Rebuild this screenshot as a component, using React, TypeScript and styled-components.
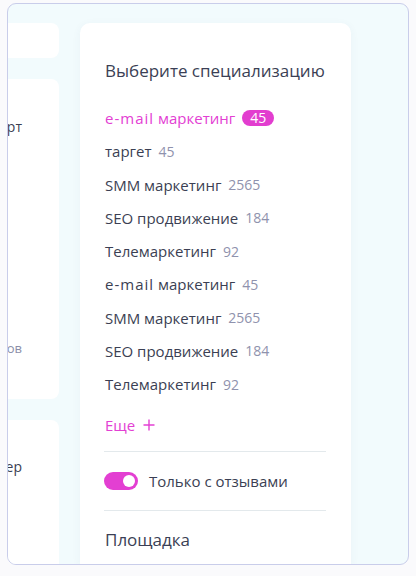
import React from "react";
import styled, { createGlobalStyle } from "styled-components";

const GlobalStyle = createGlobalStyle`
  * { box-sizing: border-box; }
  html, body { margin: 0; padding: 0; background: #fafafc; }
  body { font-family: "Open Sans", "Noto Sans", sans-serif; }
`;

const Frame = styled.div`
  margin: 3px 7px 0;
  height: 562px;
  border: 1px solid #c9cdea;
  border-radius: 9px;
  background: #f2fbfd;
  overflow: hidden;
  display: flex;
  align-items: stretch;
  padding-top: 19px;
`;

const LeftColumn = styled.div`
  flex: none;
  width: 200px;
  margin-left: -149px;
  display: flex;
  flex-direction: column;
  gap: 21px;
`;

const SideCard = styled.div<{ $h?: number }>`
  background: #ffffff;
  border-radius: 8px;
  ${(p) => (p.$h ? `height: ${p.$h}px; flex: none;` : `flex: 1; border-radius: 8px 8px 0 0;`)}
  display: flex;
  flex-direction: column;
  justify-content: space-between;
  text-align: right;
  padding: 0 37px 0 16px;
  font-size: 14px;
  line-height: 20px;
  color: #3b3f53;
`;

const SideText = styled.div<{ $muted?: boolean; $top?: number; $bottom?: number }>`
  color: ${(p) => (p.$muted ? "#8a8ea8" : "#3b3f53")};
  font-size: ${(p) => (p.$muted ? "13px" : "14px")};
  margin-top: ${(p) => p.$top ?? 0}px;
  margin-bottom: ${(p) => p.$bottom ?? 0}px;
`;

const MainCard = styled.div`
  flex: none;
  width: 271px;
  margin-left: 21px;
  background: #ffffff;
  border-radius: 10px 10px 0 0;
  box-shadow: 0 2px 10px rgba(60, 80, 120, 0.05);
  padding: 36px 25px 0 24px;
  display: flex;
  flex-direction: column;
`;

const Heading = styled.div`
  font-size: 17px;
  line-height: 24px;
  color: #3b3f55;
  padding-left: 1px;
`;

const List = styled.div`
  margin-top: 18.4px;
  display: flex;
  flex-direction: column;
  padding-left: 1px;
`;

const Item = styled.div<{ $active?: boolean }>`
  height: 33.25px;
  display: flex;
  align-items: center;
  gap: 7px;
  font-size: 15px;
  color: ${(p) => (p.$active ? "#e340d3" : "#3b3f53")};
`;

const Latin = styled.span`
  letter-spacing: 1px;
`;

const Count = styled.span`
  font-size: 14px;
  color: #8f92ad;
`;

const Badge = styled.span`
  display: inline-flex;
  align-items: center;
  justify-content: center;
  height: 16px;
  padding: 0 8px;
  border-radius: 8px;
  background: #e23dcf;
  color: #ffffff;
  font-size: 14px;
  line-height: 16px;
`;

const More = styled.div`
  margin-top: 12px;
  line-height: 24px;
  font-size: 15px;
  color: #e340d3;
  display: flex;
  align-items: center;
  gap: 8px;
  padding-left: 1px;
`;

const Divider = styled.div<{ $top: number }>`
  margin-top: ${(p) => p.$top}px;
  height: 1px;
  background: #e3e9ec;
`;

const ToggleRow = styled.div`
  padding: 20px 0;
  display: flex;
  align-items: center;
  gap: 11px;
  font-size: 15px;
  line-height: 18px;
  color: #3b3f53;
`;

const Toggle = styled.div`
  position: relative;
  width: 34px;
  height: 18px;
  border-radius: 9px;
  background: #e33fd2;
  flex: none;
`;

const Knob = styled.div`
  position: absolute;
  top: 3px;
  right: 3px;
  width: 12px;
  height: 12px;
  border-radius: 50%;
  background: #ffffff;
`;

const SubHeading = styled.div`
  margin-top: 17.4px;
  font-size: 17px;
  line-height: 24px;
  color: #3b3f55;
  padding-left: 1px;
`;

const Plus = () => (
  <svg width="12" height="12" viewBox="0 0 12 12" fill="none">
    <path d="M6 0.5V11.5M0.5 6H11.5" stroke="#e340d3" strokeWidth="1.4" />
  </svg>
);

const items: { latin?: string; name: string; count: string; active?: boolean }[] = [
  { latin: "e-mail", name: " маркетинг", count: "45", active: true },
  { name: "таргет", count: "45" },
  { name: "SMM маркетинг", count: "2565" },
  { name: "SEO продвижение", count: "184" },
  { name: "Телемаркетинг", count: "92" },
  { latin: "e-mail", name: " маркетинг", count: "45" },
  { name: "SMM маркетинг", count: "2565" },
  { name: "SEO продвижение", count: "184" },
  { name: "Телемаркетинг", count: "92" },
];

export default function App() {
  return (
    <>
      <GlobalStyle />
      <Frame>
        <LeftColumn>
          <SideCard $h={35} />
          <SideCard $h={320}>
            <SideText $top={38}>Спорт</SideText>
            <SideText $muted $bottom={41}>отзывов</SideText>
          </SideCard>
          <SideCard>
            <SideText $top={37}>Менеджер</SideText>
          </SideCard>
        </LeftColumn>
        <MainCard>
          <Heading>Выберите специализацию</Heading>
          <List>
            {items.map((it, i) => (
              <Item key={i} $active={it.active}>
                <span>
                  {it.latin && <Latin>{it.latin}</Latin>}
                  {it.name}
                </span>
                {it.active ? <Badge>{it.count}</Badge> : <Count>{it.count}</Count>}
              </Item>
            ))}
          </List>
          <More>
            <span>Еще</span>
            <Plus />
          </More>
          <Divider $top={14} />
          <ToggleRow>
            <Toggle>
              <Knob />
            </Toggle>
            <span>Только с отзывами</span>
          </ToggleRow>
          <Divider $top={0} />
          <SubHeading>Площадка</SubHeading>
        </MainCard>
      </Frame>
    </>
  );
}
